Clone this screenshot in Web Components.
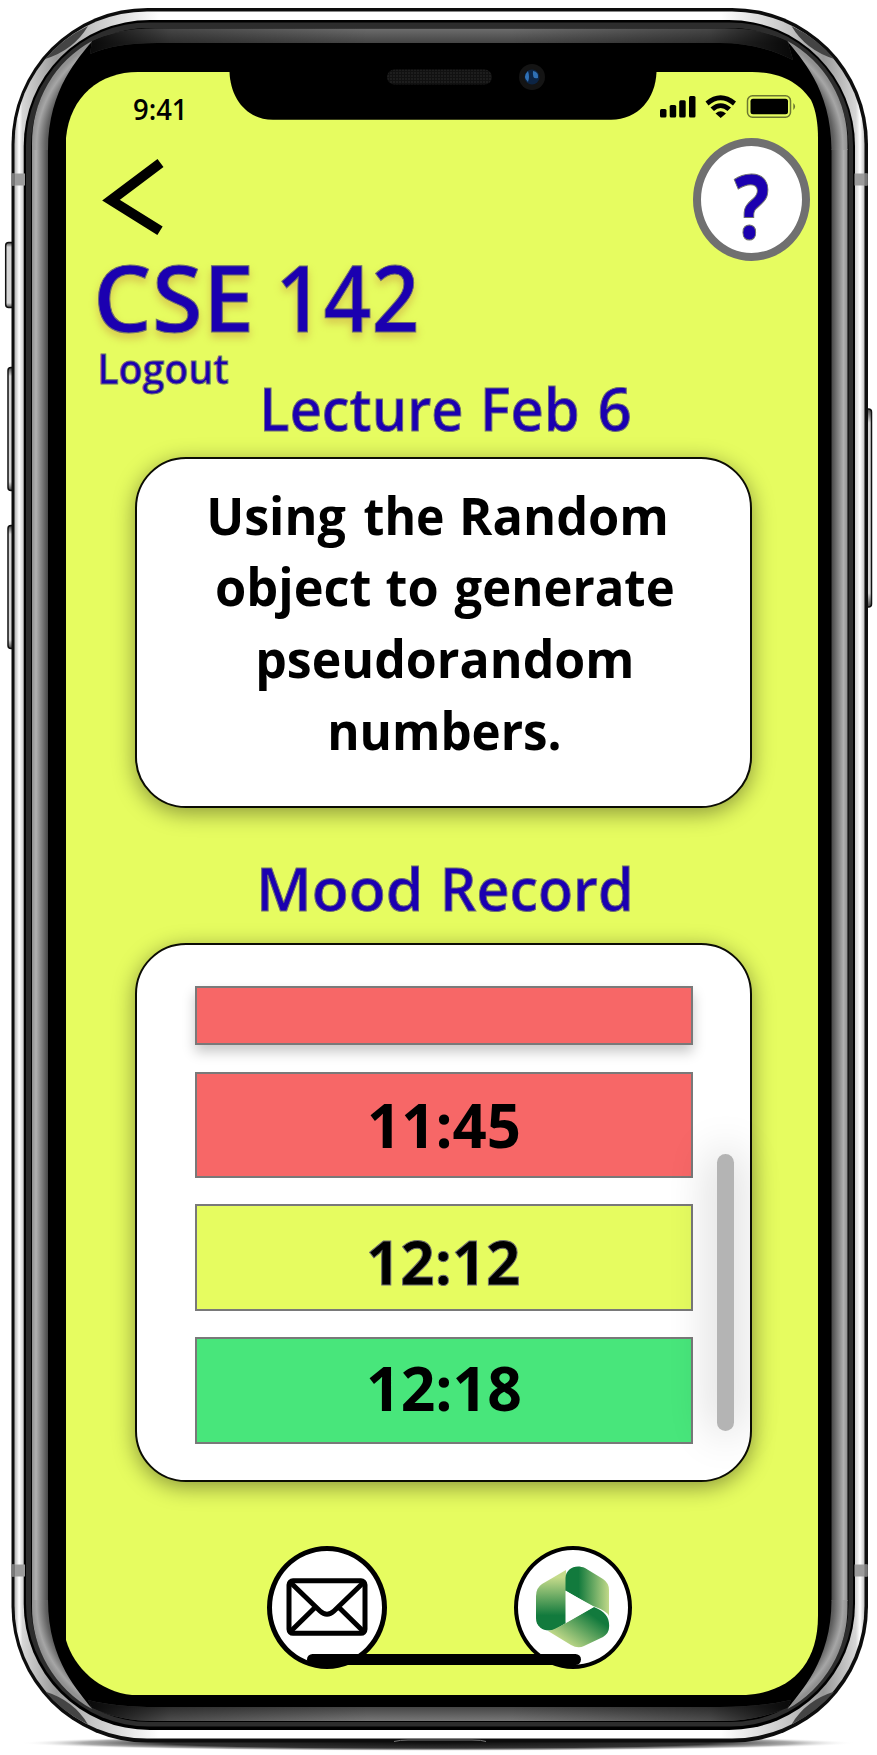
<!DOCTYPE html>
<html lang="en">
<head>
<meta charset="utf-8">
<title>CSE 142</title>
<style>
html,body{margin:0;background:#fff}
body{width:877px;height:1755px;overflow:hidden;font-family:"Open Sans","Noto Sans",sans-serif}
</style>
</head>
<body>
<lecture-page></lecture-page>
<script>
/* One line of text; each "offset:width" pair in spans gives a word's drawn extent in pixels.
   The host's bottom edge is the baseline. */
class InkText extends HTMLElement {
  connectedCallback() {
    const a = (n, d) => this.getAttribute(n) ?? d;
    const words = this.textContent.trim().split(' ');
    const size = +a('size'), weight = a('weight', '600');
    const fam = '"Open Sans","Noto Sans",sans-serif';
    const spans = a('spans').split(' ').map(p => p.split(':').map(Number));
    const c = document.createElement('canvas').getContext('2d');
    c.font = `${weight} ${size}px ${fam}`;
    const h = Math.round(size * .714);
    const parts = words.map((word, i) => {
      const m = c.measureText(word), [x, w] = spans[i];
      const s = w / (m.actualBoundingBoxLeft + m.actualBoundingBoxRight);
      return `<tspan x="${x + m.actualBoundingBoxLeft * s}" textLength="${m.width * s}" lengthAdjust="spacingAndGlyphs">${word}</tspan>`;
    });
    const last = spans[spans.length - 1], w = last[0] + last[1];
    this.attachShadow({mode: 'open'}).innerHTML = `<style>
      :host{display:block;width:${w}px;height:${h}px;flex:none}
      svg{display:block;overflow:visible}
      text{font:${weight} ${size}px ${fam};fill:${a('color', '#000')};stroke:${a('stroke', 'none')};stroke-width:1px}
      </style><svg width="${w}" height="${h}"><text y="${h}">${parts.join(' ')}</text></svg>`;
  }
}
customElements.define('ink-text', InkText);

const define = (name, html) => customElements.define(name, class extends HTMLElement {
  constructor() { super(); this.attachShadow({mode: 'open'}).innerHTML = html; }
});

const rr = (x, y, r, b, rad, fill) => `<rect x="${x}" y="${y}" width="${r - x}" height="${b - y}" rx="${rad}" fill="${fill}"/>`;
const side = `<path d="M32 149h16v1452h-16z" fill="url(#side)"/>
 <path d="M32 150V144A116 116 0 0 1 92 41C80 57 48 88 48 150Z" fill="url(#cornerTop)"/>
 <path d="M32 1600V1606A116 116 0 0 0 92 1709C80 1692 48 1662 48 1600Z" fill="url(#cornerBottom)"/>
 <path d="M45 59A132 132 0 0 1 88 26Q74 50 45 59Z" fill="#444"/>
 <path d="M45 1691.500A132 132 0 0 0 88 1724.500Q74 1700.500 45 1691.500Z" fill="#444"/>
 <path d="M12 173.500h13v12h-13zM12 1564.500h13v12h-13z" fill="#9b9b9b"/><path d="M12 173.500h3v12h-3zM12 1564.500h3v12h-3z" fill="#777"/>`;
const stops = `<stop offset=".8" stop-color="#3c3c3c"/><stop offset=".88" stop-color="#606060"/><stop offset=".96" stop-color="#a6a6a6"/><stop offset="1" stop-color="#909090"/>`;
const topBand = 'M92 41Q118 28.500 155 28.500H724.500Q762 28.500 787.500 41L793 60Q760 43 720 43H157Q115 43 90 54Z';
const bottomBand = 'M88 1700Q115 1707 157 1707H720Q760 1707 791 1700L787.500 1708Q755 1721 722 1721H155Q120 1721 92 1708Z';
define('phone-frame', `<style>:host{display:block;width:877px;height:1755px}svg{display:block}</style>
<svg width="877" height="1755" viewBox="0 0 877 1755"><defs>
 <linearGradient id="side" gradientUnits="userSpaceOnUse" x1="32" x2="48" y1="0" y2="0"><stop offset="0" stop-color="#909090"/><stop offset=".25" stop-color="#b0b0b0"/><stop offset=".6" stop-color="#808080"/><stop offset="1" stop-color="#484848"/></linearGradient>
 <radialGradient id="cornerTop" gradientUnits="userSpaceOnUse" cx="148" cy="146" r="116">${stops}</radialGradient>
 <radialGradient id="cornerBottom" gradientUnits="userSpaceOnUse" cx="148" cy="1604" r="116">${stops}</radialGradient>
 <linearGradient id="ring" gradientUnits="userSpaceOnUse" x1="14" x2="866" y1="0" y2="0"><stop offset="0" stop-color="#aaa"/><stop offset=".006" stop-color="#fff"/><stop offset=".01" stop-color="#d6d6d6"/><stop offset=".05" stop-color="#999"/><stop offset=".09" stop-color="#c4c4c4"/><stop offset=".17" stop-color="#fff"/><stop offset=".83" stop-color="#fff"/><stop offset=".91" stop-color="#c4c4c4"/><stop offset=".95" stop-color="#999"/><stop offset=".988" stop-color="#d6d6d6"/><stop offset=".993" stop-color="#fff"/><stop offset="1" stop-color="#aaa"/></linearGradient>
 <linearGradient id="tv" gradientUnits="userSpaceOnUse" x1="0" x2="0" y1="28" y2="43"><stop offset="0" stop-color="#6e6e6e"/><stop offset="1" stop-color="#444"/></linearGradient>
 <linearGradient id="bv" gradientUnits="userSpaceOnUse" x1="0" x2="0" y1="1707" y2="1721"><stop offset="0" stop-color="#454545"/><stop offset="1" stop-color="#777"/></linearGradient>
 <linearGradient id="fade" gradientUnits="userSpaceOnUse" x1="84" x2="795" y1="0" y2="0"><stop offset="0" stop-color="#000" stop-opacity=".9"/><stop offset=".12" stop-color="#000" stop-opacity=".35"/><stop offset=".4" stop-color="#000" stop-opacity="0"/><stop offset=".6" stop-color="#000" stop-opacity="0"/><stop offset=".88" stop-color="#000" stop-opacity=".35"/><stop offset="1" stop-color="#000" stop-opacity=".9"/></linearGradient>
 <linearGradient id="btn" x1="0" x2="0" y1="0" y2="1"><stop offset="0" stop-color="#444"/><stop offset=".07" stop-color="#d6d6d6"/><stop offset=".93" stop-color="#d6d6d6"/><stop offset="1" stop-color="#444"/></linearGradient>
 <radialGradient id="shadow"><stop offset="0" stop-color="#111"/><stop offset=".65" stop-color="#333"/><stop offset=".85" stop-color="#888" stop-opacity=".7"/><stop offset="1" stop-color="#fff" stop-opacity="0"/></radialGradient>
 <pattern id="mesh" width="3" height="3" patternUnits="userSpaceOnUse"><rect width="3" height="3" fill="#111"/><circle cx="1" cy="1" r=".8" fill="#2b2b2b"/></pattern>
 </defs>
 <ellipse cx="438" cy="1743" rx="418" ry="8" fill="url(#shadow)"/>
 <g fill="url(#btn)" stroke="#111" stroke-width="1.500"><rect x="5.700" y="242.500" width="9" height="65" rx="3"/><rect x="8" y="367.500" width="8" height="123" rx="3"/><rect x="8" y="525.500" width="8" height="123" rx="3"/><rect x="863" y="409" width="8.500" height="198" rx="3"/></g>
 ${rr(11.5, 8, 868, 1742.5, 136, '#0d0d0d')}${rr(14.5, 11.5, 864.5, 1738.5, 132.5, 'url(#ring)')}
 ${rr(23.7, 20, 855, 1730, 126, '#000')}${rr(26, 22.5, 853, 1726.5, 123, '#2d2d2d')}
 ${rr(31, 28, 848.5, 1722, 118, '#000')}
 <path d="${topBand}" fill="url(#tv)"/><path d="${topBand}" fill="url(#fade)"/>
 <path d="${bottomBand}" fill="url(#bv)"/><path d="${bottomBand}" fill="url(#fade)"/>
 ${side}<g transform="matrix(-1 0 0 1 879.500 0)">${side}</g>
 <path d="M394 1741.500Q400 1740 408 1740H472Q482 1740 486 1741.500" fill="none" stroke="#777"/>
 <path d="M66 138C70 96 100 72 138 72H752C782 72 800 84 811 100C816 110 818 124 818 138V1616C818 1665 790 1692 746 1695H132C100 1692 74 1668 66 1640Z" fill="#e6fc60"/>
 <path d="M229.500 71V72C230.500 99 247 119.700 273 119.700H611C638 119.700 655.500 99 656.500 72V71Z"/>
 <rect x="387" y="69.500" width="105" height="15" rx="7.500" fill="url(#mesh)"/>
 <circle cx="532" cy="77" r="13" fill="#141414"/><circle cx="532" cy="77" r="7.500" fill="#0c2444"/><path d="M528 71Q522 77 528 82Q530 77 528 71M533 71Q532 80 538 78Q539 72 533 71" fill="#2f70b5"/>
</svg>`);

define('status-icons', `<style>:host{display:block}svg{display:block}</style>
<svg width="140" height="26" viewBox="0 0 140 26"><rect x="2" y="15" width="6.500" height="8.500" rx="1.500"/><rect x="11.700" y="11" width="6.500" height="12.500" rx="1.500"/><rect x="21.200" y="6.300" width="6.500" height="17.200" rx="1.500"/><rect x="31" y="2" width="6.500" height="21.500" rx="1.500"/>
<path d="M47.500 7.500Q62.500-5 78 7.500L75 11.500Q62.500 1 50.500 11.500ZM52.500 13.500Q62.500 5 73 13.500L69.500 17Q62.500 11 56 17ZM57.500 19.500Q62.500 15 68 19.500L62.700 24Z"/>
<rect x="89.500" y="1.700" width="43" height="21.500" rx="5" fill="none" stroke="#6c7730" stroke-width="1.500"/><rect x="92.500" y="4.700" width="37.500" height="15.500" rx="2.500"/><path d="M135.300 9Q139 12.500 135.300 16Z" fill="#6c7730"/></svg>`);

define('back-button', `<style>:host{display:block}svg{display:block}</style><svg width="68" height="84" viewBox="0 0 68 84"><path d="M61.500 8L12 45.200L61 75.800" fill="none" stroke="#000" stroke-width="10"/></svg>`);

define('round-badge', `<style>:host{display:flex;box-sizing:border-box;align-items:center;justify-content:center;border:solid;border-radius:50%;background:#fff}</style><slot></slot>`);

define('mail-icon', `<style>:host{display:block}svg{display:block}</style><svg width="82" height="58" viewBox="0 0 82 58" fill="none" stroke="#000" stroke-width="5"><rect x="3" y="2.800" width="76" height="52.500" rx="4"/><path d="M4 4L34 33Q41 39.500 48 33L78 4M4 54L29 29.500M78 54L53 29.500"/></svg>`);

define('play-logo', `<style>:host{display:block}svg{display:block}</style><svg width="74" height="82" viewBox="0 0 74 82"><defs>
<linearGradient id="a" x1="0" x2="0" y1="0" y2="1"><stop offset=".12" stop-color="#c5db8b"/><stop offset=".75" stop-color="#127a3d"/></linearGradient>
<linearGradient id="b" x1="0" x2="1" y1="0" y2="0"><stop offset=".3" stop-color="#127a3d"/><stop offset="1" stop-color="#c1d989"/></linearGradient>
<linearGradient id="c" x1="1" x2=".25" y1=".2" y2=".9"><stop offset=".2" stop-color="#127a3d"/><stop offset="1" stop-color="#c5db8b"/></linearGradient></defs>
<path d="M30 4L6 18Q0 22 0 30V52C0 63 11 67 20 63L30 57Z" fill="url(#a)"/>
<path d="M29.500 25V12C30 2 40-2 49 2L67 13Q73 17 73 24V50Q71 45 57 40Z" fill="url(#b)"/>
<path d="M12 65Q18 64 30 57L58 41C70 46 74 52 73 62Q73 67 67 71L48 80Q42 83 35 79Z" fill="url(#c)"/>
<path d="M29.500 24.500L57.500 41L29.500 57Z" fill="#fff"/></svg>`);

define('info-card', `<style>:host{display:block;box-sizing:border-box;width:617px;border:2px solid #0b0c04;border-radius:51px;background:#fff;box-shadow:0 5px 22px rgba(0,0,0,.4)}</style><slot></slot>`);

customElements.define('mood-row', class extends HTMLElement {
  connectedCallback() {
    this.attachShadow({mode: 'open'}).innerHTML = `<style>:host{display:flex;box-sizing:border-box;width:498px;height:${this.getAttribute('h')}px;justify-content:center;border:2px solid #797979;background:${this.getAttribute('fill')};padding-top:${this.getAttribute('top') || 0}px}
    :host([raised]){box-shadow:0 7px 12px rgba(0,0,0,.22)}</style><slot></slot>`;
  }
});

define('lecture-page', `<style>
:host{display:block;position:relative;width:877px;height:1755px}
phone-frame{position:absolute;inset:0}
main{position:relative;box-sizing:border-box;margin:0 0 0 66px;padding-top:72px;width:752px;height:1695px;display:flex;flex-direction:column}
.status{display:flex;height:66px;justify-content:space-between;padding:0 20px 0 67.500px;box-sizing:border-box}
.status ink-text{margin-top:27px}.status status-icons{margin-top:21.500px}
.nav{display:flex;height:126px;justify-content:space-between;padding:0 8px 0 33px}
.nav back-button{margin-top:17px}
.help{width:117px;height:123px;border-width:8px;border-color:#707070}
.help ink-text{margin:14px 0 0 0}
.title{margin:1.500px 0 0 31.500px;filter:drop-shadow(0 5px 4px rgba(190,120,50,.4))}
.logout{margin:23px 0 0 34px}
.h1{margin:4.500px 0 0 197.500px}
info-card{margin-left:69px}
.about{margin-top:26px;height:351px;display:flex;flex-direction:column;gap:34.700px;padding-top:38.500px}
.h2{margin:60px 0 0 194.500px}
.moods{margin-top:32px;height:539px;padding:41px 0 0 58px}
.cols{display:flex;gap:24px}
.rows{display:flex;flex-direction:column;gap:26.600px}
.bar{width:17px;height:277px;margin-top:168px;border-radius:9px;background:#b4b4b4;box-shadow:0 0 44px 4px rgba(0,0,0,.19)}
.foot{display:flex;justify-content:space-between;margin:63.500px 186px 0 201px;height:123px}
.mail{width:120px;height:123px;border-width:5.500px}
.play{width:118px;height:123px;border-width:4px}
.home{position:absolute;left:241px;top:1654px;width:274px;height:10.500px;border-radius:6px;background:#000}
</style>
<phone-frame></phone-frame>
<main>
<div class="status"><ink-text spans="0:49" size="29.500" weight="600">9:41</ink-text><status-icons></status-icons></div>
<div class="nav"><back-button></back-button><round-badge class="help"><ink-text spans="0:34.500" size="89" weight="700" color="#1b00b0" stroke="#707070">?</ink-text></round-badge></div>
<ink-text class="title" spans="0:151.500 183:135.500" size="93" color="#1b00b0" stroke="#707070">CSE 142</ink-text>
<ink-text class="logout" spans="0:128.500" size="41" color="#1b00b0" stroke="#707070">Logout</ink-text>
<ink-text class="h1" spans="0:197 220.500:93 335.500:30" size="60" color="#1b00b0" stroke="#707070">Lecture Feb 6</ink-text>
<info-card class="about">
<ink-text style="margin-left:73px" spans="0:135.500 154.500:78.500 253:203" size="52" weight="700">Using the Random</ink-text>
<ink-text style="margin-left:80px" spans="0:153 169.500:50 237.500:218.500" size="52" weight="700">object to generate</ink-text>
<ink-text style="margin-left:121.500px" spans="0:372.500" size="52" weight="700">pseudorandom</ink-text>
<ink-text style="margin-left:193.500px" spans="0:228" size="52" weight="700">numbers.</ink-text>
</info-card>
<ink-text class="h2" spans="0:158 183.500:185" size="60" color="#1b00b0" stroke="#707070">Mood Record</ink-text>
<info-card class="moods"><div class="cols"><div class="rows">
<mood-row h="59" fill="#f76767" raised></mood-row>
<mood-row h="106.300" fill="#f76767" top="30"><ink-text spans="0:149" size="61" weight="700">11:45</ink-text></mood-row>
<mood-row h="106.300" fill="#e6fc60" top="35"><ink-text spans="0:149.500" size="61" weight="700" stroke="#707070">12:12</ink-text></mood-row>
<mood-row h="106.300" fill="#48e67b" top="28"><ink-text spans="0:151" size="61" weight="700">12:18</ink-text></mood-row>
</div><div class="bar"></div></div></info-card>
<div class="foot"><round-badge class="mail"><mail-icon></mail-icon></round-badge><round-badge class="play"><play-logo></play-logo></round-badge></div>
<div class="home"></div>
</main>`);
</script>
</body>
</html>
